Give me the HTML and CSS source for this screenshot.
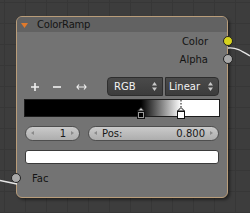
FILE: index.html
```html
<!DOCTYPE html>
<html lang="en">
<head>
    <meta charset="UTF-8">
    <title>ColorRamp</title>
    <link rel="stylesheet" href="styles.css">
</head>
<body>
    <!-- kabel node -->
    <svg class="wires" width="250" height="213" viewBox="0 0 250 213">
        <path d="M228 48 C236 47, 242 51, 250 56" />
        <path d="M0 180.5 C6 181.5, 11 183, 17 184" />
    </svg>

    <div class="node">
        <div class="node-header">
            <svg class="collapse" width="7" height="5" viewBox="0 0 7 5">
                <polygon points="0,0 7,0 3.5,5" fill="#e07a2c" />
            </svg>
            <span class="node-title">ColorRamp</span>
        </div>

        <div class="socket-row out">
            <span>Color</span>
            <i class="socket socket-color"></i>
        </div>
        <div class="socket-row out">
            <span>Alpha</span>
            <i class="socket socket-value"></i>
        </div>

        <div class="node-content">
            <div class="toolbar">
                <svg class="tool tool-add" width="10" height="10" viewBox="0 0 10 10">
                    <path d="M5 1 V9 M1 5 H9" />
                </svg>
                <svg class="tool tool-del" width="10" height="10" viewBox="0 0 10 10">
                    <path d="M1 5 H9" />
                </svg>
                <svg class="tool tool-flip" width="11" height="10" viewBox="0 0 11 10">
                    <path d="M3 2.5 L1 5 L3 7.5 M8 2.5 L10 5 L8 7.5 M1 5 H10" />
                </svg>
                <div class="dropdowns">
                    <div class="dropdown left">
                        <span>RGB</span>
                        <svg class="updown" width="5" height="9" viewBox="0 0 5 9">
                            <polygon points="0,3.5 2.5,0 5,3.5" />
                            <polygon points="0,5.5 2.5,9 5,5.5" />
                        </svg>
                    </div>
                    <div class="dropdown right">
                        <span>Linear</span>
                        <svg class="updown" width="5" height="9" viewBox="0 0 5 9">
                            <polygon points="0,3.5 2.5,0 5,3.5" />
                            <polygon points="0,5.5 2.5,9 5,5.5" />
                        </svg>
                    </div>
                </div>
            </div>

            <div class="ramp">
                <svg class="ramp-markers" width="194" height="22" viewBox="0 0 194 22">
                    <!-- stop hitam -->
                    <polygon points="112.5,11 116,7.5 119.5,11" fill="#cfcfcf" stroke="#111" stroke-width="1" />
                    <rect x="112.5" y="11.5" width="7" height="7" fill="#000" stroke="#111" />
                    <rect x="113.5" y="12.5" width="5" height="5" fill="none" stroke="#9a9a9a" />
                    <!-- stop putih (aktif) -->
                    <path d="M156 0 V7" stroke="#111" stroke-dasharray="1.5 1.5" />
                    <polygon points="152.5,11 156,7.5 159.5,11" fill="#f4f4f4" stroke="#111" stroke-width="1" />
                    <rect x="152.5" y="11.5" width="7" height="7" fill="#fff" stroke="#111" />
                </svg>
            </div>

            <div class="fields">
                <div class="num-field field-index">
                    <i class="arrow arrow-left"></i>
                    <span class="value">1</span>
                    <i class="arrow arrow-right"></i>
                </div>
                <div class="num-field field-pos">
                    <i class="arrow arrow-left"></i>
                    <span class="label">Pos:</span>
                    <span class="value">0.800</span>
                    <i class="arrow arrow-right"></i>
                </div>
            </div>

            <div class="color-swatch"></div>
        </div>

        <div class="socket-row in">
            <i class="socket socket-value"></i>
            <span>Fac</span>
        </div>
    </div>
</body>
</html>
```

FILE: styles.css
```css
body {
    margin: 0;
    width: 250px;
    height: 213px;
    overflow: hidden;
    position: relative;
    background-color: #3d3d3d;
    background-image:
        linear-gradient(#373737 1px, transparent 1px),
        linear-gradient(90deg, #373737 1px, transparent 1px);
    background-size: 21px 21px;
    background-position: 4px 2px;
    font-family: "DejaVu Sans", sans-serif;
    font-size: 10px;
    color: #141414;
}

/* kabel di atas grid */
.wires {
    position: absolute;
    left: 0;
    top: 0;
    z-index: 2;
}

.wires path {
    fill: none;
    stroke: #e6e6e6;
    stroke-width: 1.4;
}

.node {
    position: absolute;
    left: 16px;
    top: 16px;
    width: 212px;
    height: 182px;
    box-sizing: border-box;
    border: 1px solid #b99d7a;
    border-radius: 6px;
    background: #737373;
    box-shadow: 2px 2px 3px rgba(0, 0, 0, 0.45);
    display: flex;
    flex-direction: column;
    z-index: 1;
}

.node-header {
    height: 15px;
    background: #626262;
    border-radius: 5px 5px 0 0;
    display: flex;
    align-items: center;
    padding-left: 4px;
    gap: 9px;
}

.collapse {
    margin-top: 1px;
}

.node-title {
    letter-spacing: -0.2px;
}

.socket-row {
    height: 18px;
    display: flex;
    align-items: center;
    position: relative;
}

.socket-row.out {
    justify-content: flex-end;
    padding-right: 19px;
}

.socket-row.out:first-of-type {
    margin-top: 7px;
}

.socket-row.in {
    padding-left: 15px;
    margin-top: 5px;
}

.socket {
    position: absolute;
    width: 8px;
    height: 8px;
    border-radius: 50%;
    border: 1px solid #222;
    top: 4px;
}

.out .socket {
    right: -6px;
}

.in .socket {
    left: -6px;
}

.socket-color {
    background: #d6d21e;
}

.socket-value {
    background: #a8a8a8;
}

.node-content {
    padding: 0 7px;
}

.toolbar {
    margin-top: 9px;
    height: 19px;
    display: flex;
    align-items: center;
}

.tool path {
    fill: none;
    stroke: #f0f0f0;
    stroke-width: 1.6;
}

.tool-add {
    margin-left: 6px;
}

.tool-del {
    margin-left: 12px;
}

.tool-flip {
    margin-left: 14px;
}

.tool-flip path {
    stroke-width: 1.2;
}

.dropdowns {
    margin-left: auto;
    margin-right: 1px;
    display: flex;
    gap: 2px;
    height: 19px;
}

.dropdown {
    box-sizing: border-box;
    height: 19px;
    border: 1px solid #2e2e2e;
    background: linear-gradient(#4a4a4a, #3c3c3c);
    color: #f2f2f2;
    display: flex;
    align-items: center;
    justify-content: space-between;
    padding: 0 5px 0 6px;
}

.dropdown.left {
    width: 56px;
    border-radius: 4px 0 0 4px;
}

.dropdown.right {
    width: 54px;
    border-radius: 0 4px 4px 0;
    padding-left: 3px;
}

.updown polygon {
    fill: #c8c8c8;
}

.ramp {
    margin-top: 3px;
    height: 18px;
    box-sizing: border-box;
    border: 1px solid #1c1c1c;
    position: relative;
    background: linear-gradient(to right, #000 0%, #000 59.8%, #fff 80.4%, #fff 100%);
}

.ramp-markers {
    position: absolute;
    left: 0;
    top: 0;
    overflow: visible;
}

.fields {
    margin-top: 9px;
    height: 15px;
    display: flex;
    padding-left: 1px;
    gap: 8px;
}

.num-field {
    box-sizing: border-box;
    height: 15px;
    border: 1px solid #4e4e4e;
    border-radius: 8px;
    background: linear-gradient(#cacaca, #adadad);
    display: flex;
    align-items: center;
    position: relative;
    color: #181818;
}

.field-index {
    width: 55px;
}

.field-index .value {
    margin-left: auto;
    margin-right: 13px;
}

.field-pos {
    width: 131px;
    padding-left: 13px;
}

.field-pos .value {
    margin-left: auto;
    margin-right: 13px;
}

.arrow {
    position: absolute;
    top: 4px;
    width: 0;
    height: 0;
    border-top: 2.5px solid transparent;
    border-bottom: 2.5px solid transparent;
}

.arrow-left {
    left: 5px;
    border-right: 3px solid #8a8a8a;
}

.arrow-right {
    right: 5px;
    border-left: 3px solid #8a8a8a;
}

.color-swatch {
    margin: 9px 1px 0 1px;
    height: 14px;
    box-sizing: border-box;
    background: #fff;
    border: 1px solid #3a3a3a;
    border-radius: 3px;
}
```
